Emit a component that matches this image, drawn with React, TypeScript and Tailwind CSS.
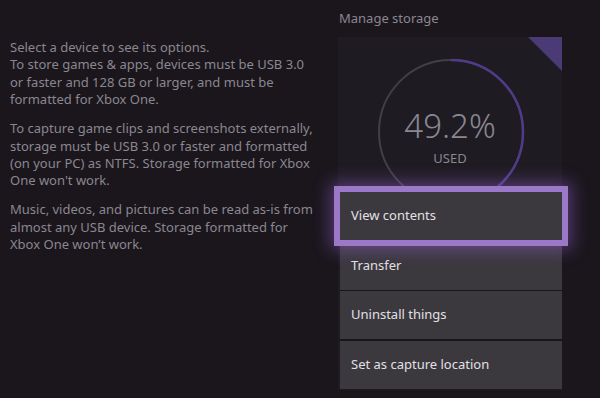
import React from 'react';

const menuItems = ['View contents', 'Transfer', 'Uninstall things', 'Set as capture location'];

function UsageRing({ percent }: { percent: number }) {
  const r = 72;
  const c = 2 * Math.PI * r;
  const used = (percent / 100) * c;
  return (
    <svg width="150" height="150" viewBox="0 0 150 150" className="absolute left-[38px] top-[20px]">
      <circle cx="75" cy="75" r={r} fill="none" stroke="#423f46" strokeWidth="2" />
      <circle
        cx="75"
        cy="75"
        r={r}
        fill="none"
        stroke="#503b88"
        strokeWidth="2.5"
        strokeDasharray={`${used} ${c}`}
        transform="rotate(-90 75 75)"
      />
    </svg>
  );
}

export default function App() {
  return (
    <div
      className="w-[600px] h-[398px] overflow-hidden bg-[#1a161c] flex text-[13px] leading-[17.4px]"
      style={{ fontFamily: '"Segoe UI", "Noto Sans", "Open Sans", sans-serif' }}
    >
      {/* Left info text */}
      <div className="w-[339px] pl-[10px] pr-[20px] pt-[39px] text-[#8a8790] flex flex-col gap-[11.6px]">
        <p>
          Select a device to see its options.
          <br />
          To store games &amp; apps, devices must be USB 3.0 or faster and 128 GB or larger, and must be formatted for
          Xbox One.
        </p>
        <p>
          To capture game clips and screenshots externally, storage must be USB 3.0 or faster and formatted (on your
          PC) as NTFS. Storage formatted for Xbox One won't work.
        </p>
        <p>
          Music, videos, and pictures can be read as-is from almost any USB device. Storage formatted for Xbox One
          won’t work.
        </p>
      </div>

      {/* Right column */}
      <div className="flex flex-col">
        <div className="pt-[10px] h-[37px] text-[#8a8790]">Manage storage</div>
        <div className="relative w-[224px] h-[353px] bg-[#1f1b22] -ml-[1px]">
          <div className="absolute right-0 top-0 w-0 h-0 border-t-[34px] border-l-[34px] border-t-[#4a3a76] border-l-transparent" />
          <UsageRing percent={49.2} />
          <div className="absolute left-0 right-0 top-[72px] flex flex-col items-center text-[#8a8790]">
            <div className="text-[33px] leading-[33px] font-light">49.2%</div>
            <div className="text-[13px] leading-[14px] mt-[9px]">USED</div>
          </div>

          {/* Options menu */}
          <div className="absolute left-[2px] top-[155px] w-[222px] flex flex-col gap-[1.5px] bg-[#19161b]">
            {menuItems.map((label) => (
              <div key={label} className="h-[48px] bg-[#3b383e] flex items-center pl-[11px] text-[#e2e0e4]">
                {label}
              </div>
            ))}
            <div className="absolute -left-[6px] -right-[6px] -top-[6px] h-[60px] border-[6px] border-[#9b78c8] shadow-[0_0_16px_4px_rgba(150,100,210,0.45)] pointer-events-none" />
          </div>
        </div>
      </div>
    </div>
  );
}
